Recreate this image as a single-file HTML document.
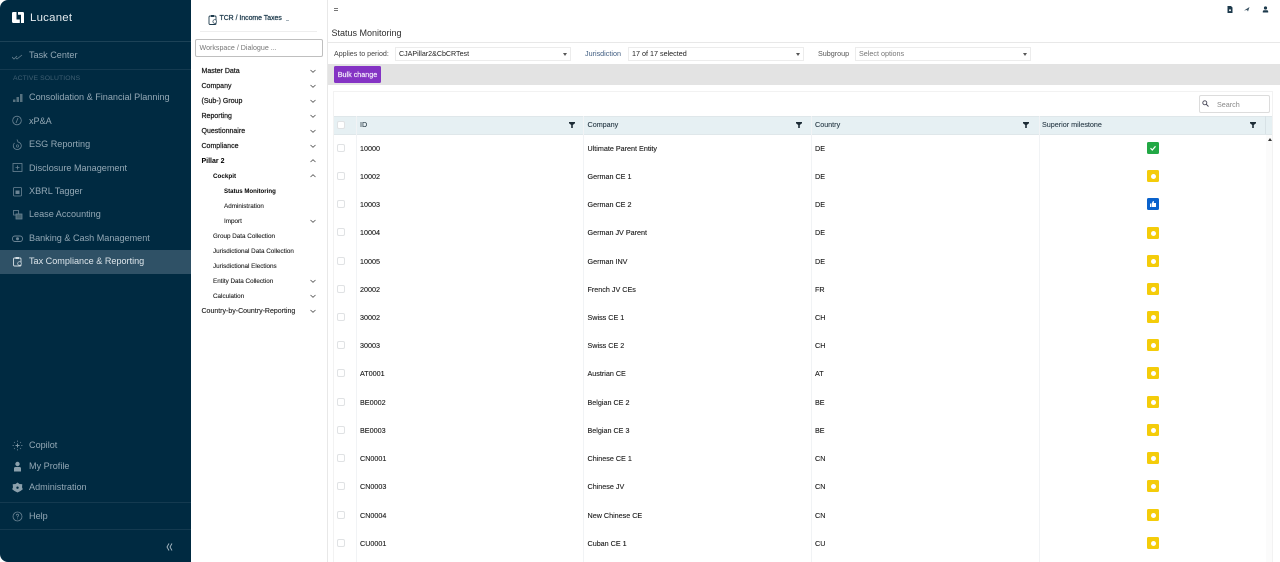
<!DOCTYPE html>
<html><head><meta charset="utf-8"><style>
html,body{margin:0;padding:0;width:1280px;height:562px;overflow:hidden;background:#fff;font-family:"Liberation Sans",sans-serif}
#p{position:relative;width:1280px;height:562px;overflow:hidden;background:#fff}
.a{position:absolute;white-space:nowrap}
.s{position:absolute;left:29px;font-size:9.1px;color:#93a8b5;white-space:nowrap;line-height:12px;margin-top:-.3px}
.i{position:absolute;left:12px;width:11px;height:11px}
.n{position:absolute;font-size:7px;color:#222;white-space:nowrap;line-height:10px;margin-top:1px}
.b{-webkit-text-stroke:.25px #222}
.c{position:absolute;left:310px;width:6px;height:4px}
.t{position:absolute;font-size:7.2px;color:#1c1c1c;white-space:nowrap;line-height:10px;margin-top:.5px;-webkit-text-stroke:.12px #1c1c1c}
.cb{position:absolute;left:337px;width:6px;height:6px;border:1px solid #e0e2e4;border-radius:2px;background:#fff;margin-top:-1px}
.m{position:absolute;left:1147px;width:12px;height:12px;border-radius:1.5px;background:#f4cc0a}
.m:after{content:"";position:absolute;left:3.5px;top:3.5px;width:5px;height:5px;background:#fff;border-radius:50%}
.sel{position:absolute;top:47px;height:12px;border:1px solid #ececec;background:#fff;font-size:7.2px;line-height:12px;color:#222;white-space:nowrap}
.ar{position:absolute;right:3px;top:5px;width:0;height:0;border-left:2px solid transparent;border-right:2px solid transparent;border-top:3px solid #555}
.f{position:absolute;top:122px;width:6px;height:6px}
.h{position:absolute;top:117px;font-size:7.2px;line-height:16px;color:#2a3c48;white-space:nowrap;-webkit-text-stroke:.12px #2a3c48}
.v{position:absolute;width:1px;background:#f1f3f5}
</style></head><body><div id="p">

<div class="a" style="left:0;top:0;width:191px;height:562px;background:#002a41;border-radius:8px 0 0 8px"></div>
<svg class="a" style="left:12px;top:12px;width:12px;height:11px" viewBox="0 0 12 11"><path d="M0 1.200A1.200 1.200 0 0 1 1.200 0H4.500V7.500H7.800V11H1.200A1.200 1.200 0 0 1 0 9.800zM6 0h4.800A1.200 1.200 0 0 1 12 1.200V11H9V2.800H6z" fill="#fff"/></svg>
<div class="a" style="left:30px;top:10.500px;font-size:11.400px;line-height:15px;color:#e4ebef;letter-spacing:.25px">Lucanet</div>
<div class="a" style="left:0;top:41px;width:191px;height:1px;background:#1c4257"></div>
<div class="a" style="left:0;top:69px;width:191px;height:1px;background:#143a50"></div>
<svg class="i" style="top:50px" viewBox="0 0 11 11"><path d="M0 7l2 2 3-3M4 8l1 1 5-4" fill="none" stroke="#66808f" stroke-width=".8"/></svg>
<div class="s" style="top:49px">Task Center</div>
<div class="a" style="left:13px;top:73.500px;font-size:6.800px;line-height:10px;color:#3f5f72;letter-spacing:.1px">ACTIVE SOLUTIONS</div>

<svg class="i" style="top:92px" viewBox="0 0 11 11"><path d="M1 10h2.500V7.500H1zM4.500 10H7V5H4.500zM8 10h2.500V2H8z" fill="#56717f"/></svg>
<div class="s" style="top:91.500px">Consolidation &amp; Financial Planning</div>
<svg class="i" style="top:115px" viewBox="0 0 11 11"><circle cx="5" cy="5.500" r="4.300" fill="none" stroke="#6b8494" stroke-width=".8"/><path d="M6 3L4 8" stroke="#6b8494" stroke-width=".8"/></svg>
<div class="s" style="top:115px">xP&amp;A</div>
<svg class="i" style="top:139px" viewBox="0 0 11 11"><path d="M5 .5L6 3A4 3.800 0 1 1 2.500 4" fill="none" stroke="#6b8494" stroke-width=".8"/><circle cx="5.500" cy="7" r="1.200" fill="none" stroke="#6b8494" stroke-width=".6"/></svg>
<div class="s" style="top:138.500px">ESG Reporting</div>
<svg class="i" style="top:162px" viewBox="0 0 11 11"><rect x="1" y="1.500" width="9" height="8" fill="none" stroke="#6b8494" stroke-width=".8"/><path d="M3.500 5.500h4M5.500 3.500v4" stroke="#6b8494" stroke-width=".8"/></svg>
<div class="s" style="top:162px">Disclosure Management</div>
<svg class="i" style="top:186px" viewBox="0 0 11 11"><rect x="1.500" y="1.500" width="8" height="8.500" rx="1" fill="none" stroke="#6b8494" stroke-width=".8"/><rect x="3.500" y="4.500" width="4" height="3.500" fill="#6b8494"/></svg>
<div class="s" style="top:185px">XBRL Tagger</div>
<svg class="i" style="top:209px" viewBox="0 0 11 11"><rect x="1.500" y="1.500" width="5" height="4.500" fill="none" stroke="#6b8494" stroke-width=".8"/><rect x="4" y="5" width="6" height="5" fill="#43626f" stroke="#6b8494" stroke-width=".8"/></svg>
<div class="s" style="top:208.500px">Lease Accounting</div>
<svg class="i" style="top:233px" viewBox="0 0 11 11"><rect x=".5" y="3" width="10" height="5.500" rx="2.500" fill="none" stroke="#6b8494" stroke-width=".9"/><circle cx="5.500" cy="5.700" r="1.500" fill="#6b8494"/></svg>
<div class="s" style="top:232px">Banking &amp; Cash Management</div>
<div class="a" style="left:0;top:250px;width:191px;height:23.500px;background:#2f5166"></div>
<svg class="i" style="top:256px" viewBox="0 0 11 11"><rect x="1.500" y="2" width="7.500" height="8" rx="1" fill="none" stroke="#d4dee4" stroke-width=".9"/><rect x="3.500" y="1" width="3.500" height="2" fill="#d4dee4"/><circle cx="7.500" cy="7.500" r="1.800" fill="#2f5166" stroke="#d4dee4" stroke-width=".7"/></svg>
<div class="s" style="top:255px;color:#dde5ea">Tax Compliance &amp; Reporting</div>

<svg class="i" style="top:440px" viewBox="0 0 11 11"><path d="M5.500 3.500v4M3.500 5.500h4" stroke="#7d95a3" stroke-width="1"/><path d="M5.500 .5v1.500M5.500 9v1.500M.5 5.500H2M9 5.500h1.500M2 2l1 1M8 8l1 1M9 2L8 3M2 9l1-1" stroke="#6b8494" stroke-width=".7"/></svg>
<div class="s" style="top:439px">Copilot</div>
<svg class="i" style="top:461px" viewBox="0 0 11 11"><circle cx="5.500" cy="3" r="2.200" fill="#8ba0ac"/><path d="M2 10.500V7.500Q2 6 3.500 6h4Q9 6 9 7.500v3z" fill="#8ba0ac"/></svg>
<div class="s" style="top:460px">My Profile</div>
<svg class="i" style="top:482px" viewBox="0 0 11 11"><path d="M5.500 .5l2 1.500 2.800.3-.3 3 .8 2-2.300 1.700-3 1.500-3-1.500L.2 7.300l.8-2-.3-3L3.500 2z" fill="#8ba0ac"/><circle cx="5.500" cy="5.700" r="1.200" fill="#002a41"/></svg>
<div class="s" style="top:481px">Administration</div>
<div class="a" style="left:0;top:502px;width:191px;height:1px;background:#143a50"></div>
<div class="a" style="left:0;top:529px;width:191px;height:1px;background:#143a50"></div>
<svg class="i" style="top:511px" viewBox="0 0 11 11"><circle cx="5.500" cy="5.500" r="4.500" fill="none" stroke="#6b8494" stroke-width=".8"/><path d="M4.200 4.500Q4.500 3 5.700 3.200 7 3.500 6.500 4.800L5.500 5.800V6.500M5.500 7.500v.8" fill="none" stroke="#6b8494" stroke-width=".8"/></svg>
<div class="s" style="top:510px">Help</div>
<svg class="a" style="left:166px;top:543px;width:7px;height:8px" viewBox="0 0 7 8"><path d="M3 .5L1 4l2 3.500M6 .5L4 4l2 3.500" fill="none" stroke="#a9bac4" stroke-width=".9"/></svg>

<!-- nav -->
<div class="a" style="left:327px;top:0;width:1px;height:562px;background:#e8e8e8"></div>
<svg class="a" style="left:208px;top:14px;width:10px;height:11px" viewBox="0 0 10 11"><rect x="1" y="2" width="7" height="8.500" rx="1" fill="none" stroke="#1d3a4c" stroke-width=".9"/><rect x="3" y="1" width="3" height="2" fill="#1d3a4c"/><circle cx="6.700" cy="7.500" r="1.800" fill="#fff" stroke="#1d3a4c" stroke-width=".7"/></svg>
<div class="a" style="left:219.500px;top:14px;font-size:6.900px;line-height:10px;color:#1d3a4c;-webkit-text-stroke:.25px #1d3a4c">TCR / Income Taxes</div>
<div class="a" style="left:286px;top:19.500px;width:3px;height:1px;background:#a5b2ba"></div>
<div class="a" style="left:200px;top:31px;width:117px;height:1px;background:#eee"></div>
<div class="a" style="left:195px;top:39px;width:126px;height:16px;border:1px solid #bfbfbf;border-radius:2px;font-size:7.100px;line-height:17px;color:#777;text-indent:3.500px">Workspace / Dialogue ...</div>

<div class="n b" style="left:201.500px;top:66px">Master Data</div>
<div class="n b" style="left:201.500px;top:81px">Company</div>
<div class="n b" style="left:201.500px;top:96px">(Sub-) Group</div>
<div class="n b" style="left:201.500px;top:111px">Reporting</div>
<div class="n b" style="left:201.500px;top:126px">Questionnaire</div>
<div class="n b" style="left:201.500px;top:141px">Compliance</div>
<div class="n" style="left:201.500px;top:156px;color:#000;font-weight:bold">Pillar 2</div>
<div class="n" style="left:213px;top:171px;font-size:6.300px;color:#000;font-weight:bold">Cockpit</div>
<div class="n" style="left:224px;top:186px;font-size:6.100px;color:#000;font-weight:bold">Status Monitoring</div>
<div class="n b" style="left:224px;top:201px;font-size:6.300px;-webkit-text-stroke:.12px #222">Administration</div>
<div class="n b" style="left:224px;top:216px;font-size:6.300px;-webkit-text-stroke:.12px #222">Import</div>
<div class="n b" style="left:213px;top:231px;font-size:6.300px;-webkit-text-stroke:.12px #222">Group Data Collection</div>
<div class="n b" style="left:213px;top:246px;font-size:6.300px;-webkit-text-stroke:.12px #222">Jurisdictional Data Collection</div>
<div class="n b" style="left:213px;top:261px;font-size:6.300px;-webkit-text-stroke:.12px #222">Jurisdictional Elections</div>
<div class="n b" style="left:213px;top:276px;font-size:6.300px;-webkit-text-stroke:.12px #222">Entity Data Collection</div>
<div class="n b" style="left:213px;top:291px;font-size:6.300px;-webkit-text-stroke:.12px #222">Calculation</div>
<div class="n b" style="left:201.500px;top:306px;-webkit-text-stroke:.12px #222">Country-by-Country-Reporting</div>

<svg class="c" style="top:69px" viewBox="0 0 6 4"><path d="M.5 1L3 3.300 5.500 1" fill="none" stroke="#555" stroke-width=".8"/></svg>
<svg class="c" style="top:84px" viewBox="0 0 6 4"><path d="M.5 1L3 3.300 5.500 1" fill="none" stroke="#555" stroke-width=".8"/></svg>
<svg class="c" style="top:99px" viewBox="0 0 6 4"><path d="M.5 1L3 3.300 5.500 1" fill="none" stroke="#555" stroke-width=".8"/></svg>
<svg class="c" style="top:114px" viewBox="0 0 6 4"><path d="M.5 1L3 3.300 5.500 1" fill="none" stroke="#555" stroke-width=".8"/></svg>
<svg class="c" style="top:129px" viewBox="0 0 6 4"><path d="M.5 1L3 3.300 5.500 1" fill="none" stroke="#555" stroke-width=".8"/></svg>
<svg class="c" style="top:144px" viewBox="0 0 6 4"><path d="M.5 1L3 3.300 5.500 1" fill="none" stroke="#555" stroke-width=".8"/></svg>
<svg class="c" style="top:159px" viewBox="0 0 6 4"><path d="M.5 3L3 .7 5.500 3" fill="none" stroke="#555" stroke-width=".8"/></svg>
<svg class="c" style="top:174px" viewBox="0 0 6 4"><path d="M.5 3L3 .7 5.500 3" fill="none" stroke="#555" stroke-width=".8"/></svg>
<svg class="c" style="top:219px" viewBox="0 0 6 4"><path d="M.5 1L3 3.300 5.500 1" fill="none" stroke="#555" stroke-width=".8"/></svg>
<svg class="c" style="top:279px" viewBox="0 0 6 4"><path d="M.5 1L3 3.300 5.500 1" fill="none" stroke="#555" stroke-width=".8"/></svg>
<svg class="c" style="top:294px" viewBox="0 0 6 4"><path d="M.5 1L3 3.300 5.500 1" fill="none" stroke="#555" stroke-width=".8"/></svg>
<svg class="c" style="top:309px" viewBox="0 0 6 4"><path d="M.5 1L3 3.300 5.500 1" fill="none" stroke="#555" stroke-width=".8"/></svg>

<!-- header -->
<div class="a" style="left:334px;top:8px;width:4px;height:1px;background:#777"></div>
<div class="a" style="left:334px;top:10px;width:4px;height:1px;background:#777"></div>
<svg class="a" style="left:1227px;top:6px;width:6px;height:7px" viewBox="0 0 6 7"><path d="M.5 0H4L5.500 1.500V7H.5z" fill="#1d3a4c"/><circle cx="3" cy="4.200" r="1" fill="#fff"/></svg>
<svg class="a" style="left:1244px;top:7px;width:6px;height:5px" viewBox="0 0 6 5"><path d="M0 3.500L5.500 0 4 4.500 3 3z" fill="#3a5363"/></svg>
<svg class="a" style="left:1262px;top:6px;width:7px;height:7px" viewBox="0 0 7 7"><circle cx="3.500" cy="2" r="1.600" fill="#1d3a4c"/><path d="M.8 6.500V5.500Q.8 4.200 2 4.200h3q1.200 0 1.200 1.300v1z" fill="#1d3a4c"/></svg>
<div class="a" style="left:331.500px;top:27px;font-size:9px;line-height:12px;color:#2e2e2e">Status Monitoring</div>
<div class="a" style="left:328px;top:42px;width:952px;height:1px;background:#e8e8e8"></div>
<div class="a" style="left:334px;top:48.500px;font-size:7.100px;line-height:10px;color:#444">Applies to period:</div>
<div class="sel" style="left:395px;width:174px;text-indent:3px;font-size:7.100px">CJAPillar2&amp;CbCRTest<span class="ar"></span></div>
<div class="a" style="left:585px;top:48.500px;font-size:7.200px;line-height:10px;color:#3f5c80">Jurisdiction</div>
<div class="sel" style="left:628px;width:174px;text-indent:3px">17 of 17 selected<span class="ar"></span></div>
<div class="a" style="left:818px;top:48.500px;font-size:7.200px;line-height:10px;color:#555">Subgroup</div>
<div class="sel" style="left:855px;width:174px;text-indent:3px;color:#777">Select options<span class="ar"></span></div>

<div class="a" style="left:328px;top:64px;width:952px;height:21px;background:#e3e3e3"></div>
<div class="a" style="left:334px;top:66px;width:47px;height:17px;background:#8433c4;border-radius:1.500px;font-size:7.200px;line-height:17px;color:#f2e9fa;text-align:center;-webkit-text-stroke:.2px #f2e9fa">Bulk change</div>

<!-- table -->
<div class="a" style="left:333px;top:91px;width:940px;height:471px;border:1px solid #f2f2f2;border-bottom:0;box-sizing:border-box"></div>
<div class="a" style="left:1199px;top:95px;width:69px;height:16px;border:1px solid #dcdcdc;border-radius:2px;font-size:7.200px;line-height:17px;color:#888;text-indent:17px">Search</div>
<svg class="a" style="left:1202px;top:100px;width:7px;height:7px" viewBox="0 0 7 7"><circle cx="2.800" cy="2.800" r="2" fill="none" stroke="#445" stroke-width=".9"/><path d="M4.300 4.300L6.500 6.500" stroke="#445" stroke-width="1"/></svg>

<div class="a" style="left:334px;top:116px;width:938px;height:19px;background:#e6f0f3;border-top:1px solid #dfe7ea;border-bottom:1px solid #dfe7ea;box-sizing:border-box"></div>
<div class="cb" style="top:122px"></div>
<div class="h" style="left:360px">ID</div>
<div class="h" style="left:587.500px">Company</div>
<div class="h" style="left:815px">Country</div>
<div class="h" style="left:1042px">Superior milestone</div>
<svg class="f" style="left:569px" viewBox="0 0 6 6"><path d="M0 0h6v1.200L3.800 3v3H2.200V3L0 1.200z" fill="#1d2c36"/></svg>
<svg class="f" style="left:796px" viewBox="0 0 6 6"><path d="M0 0h6v1.200L3.800 3v3H2.200V3L0 1.200z" fill="#1d2c36"/></svg>
<svg class="f" style="left:1023px" viewBox="0 0 6 6"><path d="M0 0h6v1.200L3.800 3v3H2.200V3L0 1.200z" fill="#1d2c36"/></svg>
<svg class="f" style="left:1250px" viewBox="0 0 6 6"><path d="M0 0h6v1.200L3.800 3v3H2.200V3L0 1.200z" fill="#1d2c36"/></svg>
<div class="v" style="left:356px;top:116px;height:446px"></div>
<div class="v" style="left:583px;top:116px;height:446px"></div>
<div class="v" style="left:811px;top:116px;height:446px"></div>
<div class="v" style="left:1039px;top:116px;height:446px"></div>
<div class="v" style="left:1265px;top:116px;height:18px;background:#d8e2e6"></div>
<div class="a" style="left:1266px;top:135px;width:6px;height:427px;background:#fbfbfb"></div>
<div class="a" style="left:1267.500px;top:138px;width:0;height:0;border-left:2.500px solid transparent;border-right:2.500px solid transparent;border-bottom:3px solid #333"></div>

<div class="cb" style="top:145px"></div><div class="t" style="left:360px;top:143px">10000</div><div class="t" style="left:587.500px;top:143px">Ultimate Parent Entity</div><div class="t" style="left:815px;top:143px">DE</div>
<div class="m" style="top:142px;background:#22a845"><svg style="position:absolute;left:3px;top:3px;width:6px;height:6px;z-index:2;background:#22a845" viewBox="0 0 6 6"><path d="M.5 3.200L2.300 5 5.500 1.300" fill="none" stroke="#fff" stroke-width="1.200"/></svg></div>
<div class="cb" style="top:173px"></div><div class="t" style="left:360px;top:171px">10002</div><div class="t" style="left:587.500px;top:171px">German CE 1</div><div class="t" style="left:815px;top:171px">DE</div><div class="m" style="top:170px"></div>
<div class="cb" style="top:201px"></div><div class="t" style="left:360px;top:199.500px">10003</div><div class="t" style="left:587.500px;top:199.500px">German CE 2</div><div class="t" style="left:815px;top:199.500px">DE</div>
<div class="m" style="top:198px;background:#0a62cc"><svg style="position:absolute;left:3px;top:3px;width:6px;height:6px;z-index:2;background:#0a62cc" viewBox="0 0 6 6"><path d="M0 2.500h1.200V6H0zM1.700 2.500L3 0h.8v2H6v4H1.700z" fill="#fff"/></svg></div>
<div class="cb" style="top:229px"></div><div class="t" style="left:360px;top:227.500px">10004</div><div class="t" style="left:587.500px;top:227.500px">German JV Parent</div><div class="t" style="left:815px;top:227.500px">DE</div><div class="m" style="top:227px"></div>
<div class="cb" style="top:258px"></div><div class="t" style="left:360px;top:256px">10005</div><div class="t" style="left:587.500px;top:256px">German INV</div><div class="t" style="left:815px;top:256px">DE</div><div class="m" style="top:255px"></div>
<div class="cb" style="top:286px"></div><div class="t" style="left:360px;top:284px">20002</div><div class="t" style="left:587.500px;top:284px">French JV CEs</div><div class="t" style="left:815px;top:284px">FR</div><div class="m" style="top:283px"></div>
<div class="cb" style="top:314px"></div><div class="t" style="left:360px;top:312px">30002</div><div class="t" style="left:587.500px;top:312px">Swiss CE 1</div><div class="t" style="left:815px;top:312px">CH</div><div class="m" style="top:311px"></div>
<div class="cb" style="top:342px"></div><div class="t" style="left:360px;top:340.500px">30003</div><div class="t" style="left:587.500px;top:340.500px">Swiss CE 2</div><div class="t" style="left:815px;top:340.500px">CH</div><div class="m" style="top:339px"></div>
<div class="cb" style="top:370px"></div><div class="t" style="left:360px;top:368.500px">AT0001</div><div class="t" style="left:587.500px;top:368.500px">Austrian CE</div><div class="t" style="left:815px;top:368.500px">AT</div><div class="m" style="top:367px"></div>
<div class="cb" style="top:399px"></div><div class="t" style="left:360px;top:397px">BE0002</div><div class="t" style="left:587.500px;top:397px">Belgian CE 2</div><div class="t" style="left:815px;top:397px">BE</div><div class="m" style="top:396px"></div>
<div class="cb" style="top:427px"></div><div class="t" style="left:360px;top:425px">BE0003</div><div class="t" style="left:587.500px;top:425px">Belgian CE 3</div><div class="t" style="left:815px;top:425px">BE</div><div class="m" style="top:424px"></div>
<div class="cb" style="top:455px"></div><div class="t" style="left:360px;top:453.500px">CN0001</div><div class="t" style="left:587.500px;top:453.500px">Chinese CE 1</div><div class="t" style="left:815px;top:453.500px">CN</div><div class="m" style="top:452px"></div>
<div class="cb" style="top:483px"></div><div class="t" style="left:360px;top:481.500px">CN0003</div><div class="t" style="left:587.500px;top:481.500px">Chinese JV</div><div class="t" style="left:815px;top:481.500px">CN</div><div class="m" style="top:480px"></div>
<div class="cb" style="top:512px"></div><div class="t" style="left:360px;top:510px">CN0004</div><div class="t" style="left:587.500px;top:510px">New Chinese CE</div><div class="t" style="left:815px;top:510px">CN</div><div class="m" style="top:509px"></div>
<div class="cb" style="top:540px"></div><div class="t" style="left:360px;top:538px">CU0001</div><div class="t" style="left:587.500px;top:538px">Cuban CE 1</div><div class="t" style="left:815px;top:538px">CU</div><div class="m" style="top:537px"></div>

</div></body></html>
